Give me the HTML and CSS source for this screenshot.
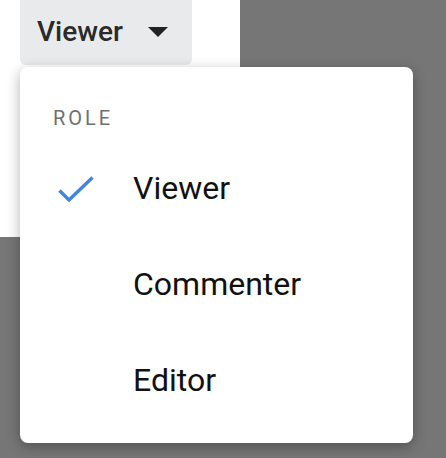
FILE: index.html
```html
<!DOCTYPE html>
<html lang="en">

<head>
    <meta charset="utf-8">
    <meta name="viewport" content="width=device-width, initial-scale=1.0">
    <title>Share role</title>
    <link rel="stylesheet" href="styles.css">
</head>

<body>
    <div class="sheet">
        <button class="role-btn">
            <span>Viewer</span>
            <svg class="caret" width="20" height="10" viewBox="0 0 20 10">
                <path d="M0 0 L20 0 L10 10 Z" fill="#222"></path>
            </svg>
        </button>
    </div>

    <div class="menu">
        <div class="menu-head">ROLE</div>
        <div class="menu-item">
            <span class="mark">
                <svg width="36" height="26" viewBox="0 0 36 26">
                    <path d="M1.5 14.5 L11 24 L34.5 1.5" fill="none" stroke="#4285e0" stroke-width="3.4"></path>
                </svg>
            </span>
            <span>Viewer</span>
        </div>
        <div class="menu-item">
            <span class="mark"></span>
            <span>Commenter</span>
        </div>
        <div class="menu-item">
            <span class="mark"></span>
            <span>Editor</span>
        </div>
    </div>
</body>

</html>
```

FILE: styles.css
```css
body {
    margin: 0;
    background-color: #767676;
    font-family: Roboto, "Liberation Sans", sans-serif;
}

.sheet {
    width: 240px;
    height: 237px;
    background-color: #fff;
}

.role-btn {
    display: flex;
    align-items: center;
    gap: 25px;
    margin-left: 20px;
    width: 172px;
    height: 65px;
    padding: 0 0 2px 17px;
    border: none;
    border-radius: 0 0 6px 6px;
    background-color: #e9eaeb;
    color: #2a2a2a;
    font-family: Roboto, "Liberation Sans", sans-serif;
    font-size: 28px;
    font-weight: 500;
}

.caret {
    margin-top: 1px;
}

/* popup role list, sits over the sheet */
.menu {
    position: absolute;
    left: 20px;
    top: 67px;
    width: 393px;
    height: 376px;
    box-sizing: border-box;
    padding: 39px 0 15px 0;
    background-color: #fff;
    border-radius: 8px;
    box-shadow: 0 4px 14px rgba(0, 0, 0, 0.3);
}

.menu-head {
    padding-left: 33px;
    height: 24px;
    line-height: 24px;
    margin-bottom: 10px;
    font-size: 20px;
    letter-spacing: 3px;
    color: #6f6f6f;
}

.menu-item {
    display: flex;
    align-items: center;
    height: 96px;
    font-size: 32px;
    color: #111;
}

.mark {
    width: 113px;
    padding-left: 38px;
    box-sizing: border-box;
    display: flex;
    align-items: center;
    padding-top: 2px;
}
```
